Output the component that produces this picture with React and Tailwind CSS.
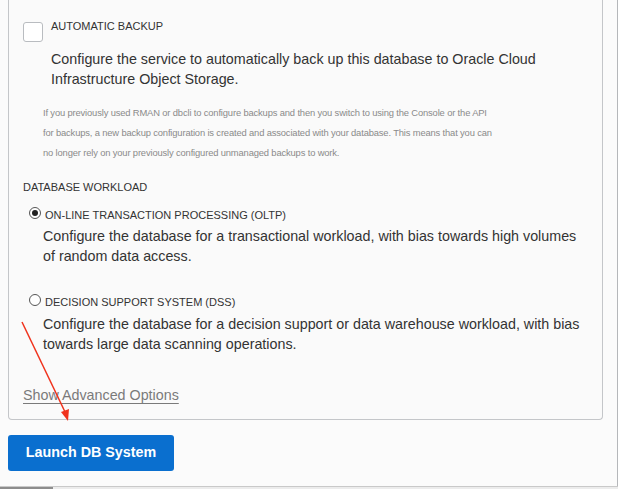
import React from "react";

function Radio({ checked }) {
  return (
    <span className="w-[12px] h-[12px] rounded-full border border-[#555] bg-white flex items-center justify-center shrink-0">
      {checked && <span className="w-[6px] h-[6px] rounded-full bg-[#222]" />}
    </span>
  );
}

export default function App() {
  return (
    <div
      className="relative w-[618px] h-[489px] overflow-hidden bg-[#fbfbfb] text-[#333]"
      style={{ fontFamily: '"Liberation Sans", Arial, sans-serif' }}
    >
      <div className="h-[486px] border-r border-[#b5b7ba] pl-[8px] pr-[14px]">
        <div className="w-[595px] border border-t-0 border-[#c4c6c9] rounded-b-[4px] bg-[#fafafa] pl-[14px] pr-[14px] pt-[19px] pb-[14px]">
          {/* automatic backup */}
          <div className="flex gap-[8px]">
            <span className="mt-[3px] w-[20px] h-[20px] rounded-[3px] border border-[#b9bcc0] bg-white shrink-0" />
            <div>
              <p className="text-[11px] leading-[14px] uppercase">Automatic Backup</p>
              <p className="mt-[16px] text-[14.3px] leading-[20px]">
                Configure the service to automatically back up this database to Oracle Cloud Infrastructure Object Storage.
              </p>
            </div>
          </div>
          <p className="mt-[14px] ml-[20px] w-[453px] text-[9.4px] tracking-[-0.15px] leading-[20px] text-[#8a8a8a]">
            If you previously used RMAN or dbcli to configure backups and then you switch to using the Console or the API for backups, a new backup configuration is created and associated with your database. This means that you can no longer rely on your previously configured unmanaged backups to work.
          </p>

          {/* workload */}
          <p className="mt-[17px] text-[11px] leading-[14px] uppercase">Database Workload</p>

          <div className="mt-[11px] ml-[6px] flex items-center gap-[4px] h-[16px]">
            <Radio checked />
            <span className="text-[11px] leading-[14px] mt-[3px]">ON-LINE TRANSACTION PROCESSING (OLTP)</span>
          </div>
          <p className="mt-[5px] ml-[20px] text-[14.3px] leading-[20px]">
            Configure the database for a transactional workload, with bias towards high volumes of random data access.
          </p>

          <div className="mt-[26px] ml-[6px] flex items-center gap-[4px] h-[16px]">
            <Radio />
            <span className="text-[11px] leading-[14px] mt-[3px]">DECISION SUPPORT SYSTEM (DSS)</span>
          </div>
          <p className="mt-[6px] ml-[20px] text-[14.3px] leading-[20px]">
            Configure the database for a decision support or data warehouse workload, with bias towards large data scanning operations.
          </p>

          <p className="mt-[31px] text-[14.3px] leading-[20px] text-[#7a7a7a] underline underline-offset-[3px]">
            Show Advanced Options
          </p>
        </div>

        <button className="mt-[15px] w-[166px] h-[36px] rounded-[3px] bg-[#0a6fcf] text-white text-[14.3px] font-bold">
          Launch DB System
        </button>
      </div>

      {/* bottom scrollbar */}
      <div className="h-[3px] border-t border-[#c9c9c9] bg-[#ececec] flex">
        <div className="w-[53px] h-full bg-[#8d8d8d]" />
      </div>

      {/* red annotation arrow */}
      <svg className="absolute left-0 top-0 pointer-events-none" width="618" height="489">
        <line x1="22" y1="322" x2="66" y2="414" stroke="#f0321c" strokeWidth="1.5" />
        <polygon points="68,421 61,412 69,409" fill="#f0321c" />
      </svg>
    </div>
  );
}
